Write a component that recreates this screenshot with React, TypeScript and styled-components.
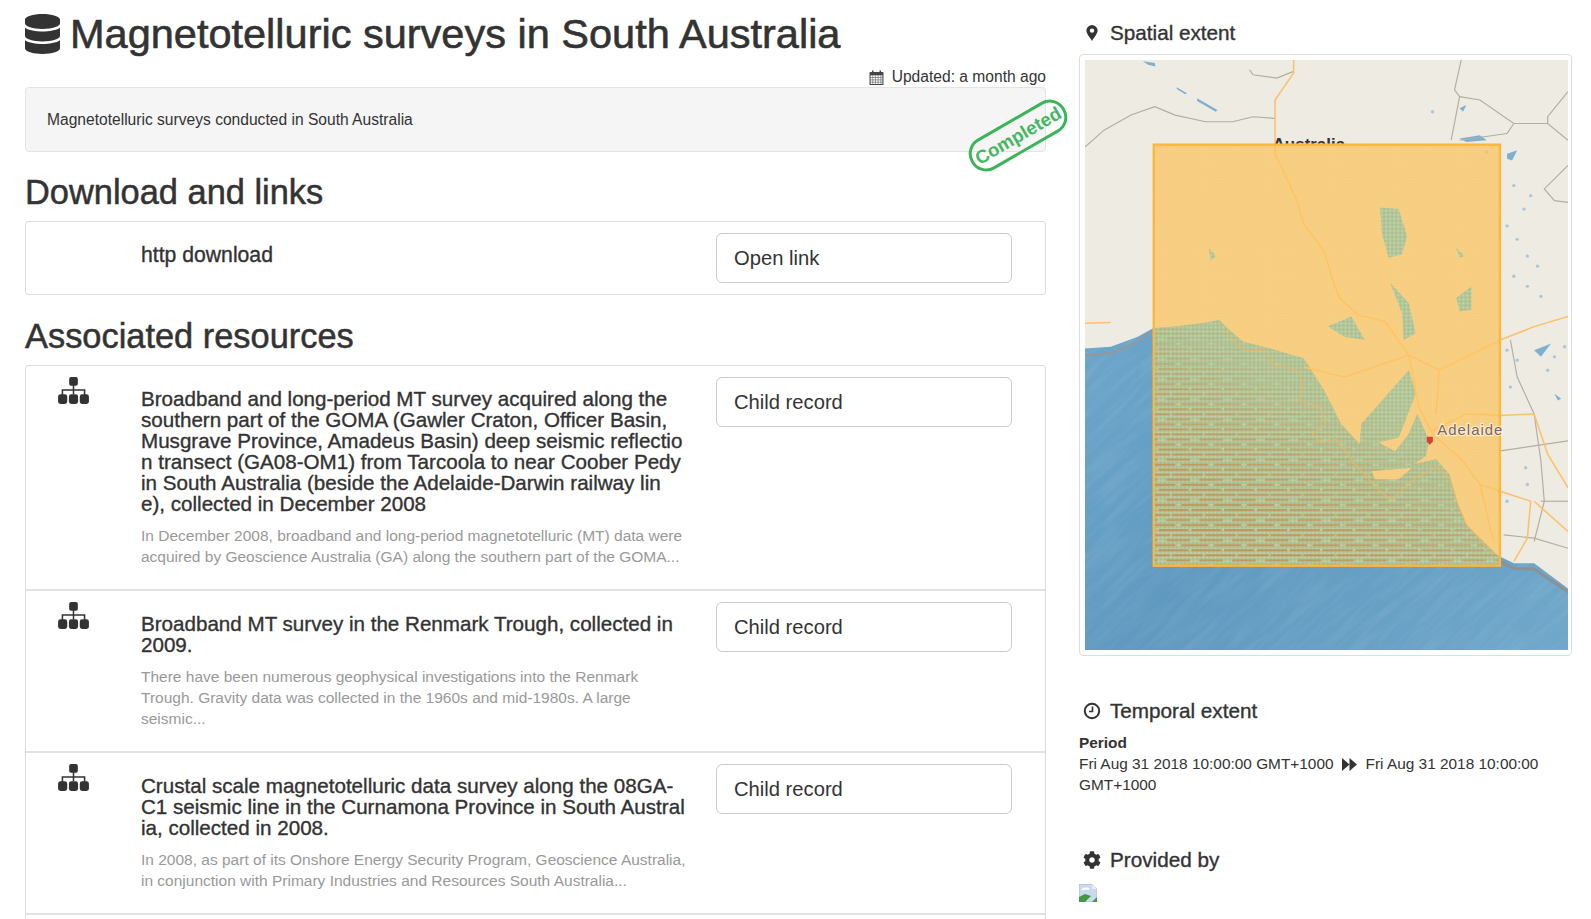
import React from 'react';
import styled, { createGlobalStyle } from 'styled-components';
import { FaDatabase, FaCog } from 'react-icons/fa';

const Global = createGlobalStyle`
  html, body { margin: 0; padding: 0; background: #fff; }
  body { font-family: "Liberation Sans", Arial, sans-serif; color: #333; }
`;

const Page = styled.div`
  display: grid;
  grid-template-columns: 1021px 493px;
  column-gap: 33px;
  padding-left: 25px;
  height: 919px;
  overflow: hidden;
  box-sizing: border-box;
`;
const Left = styled.main`
  min-width: 0;
`;
const Right = styled.aside`
  min-width: 0;
  padding-top: 21px;
`;
const Title = styled.h1`
  display: flex;
  align-items: center;
  gap: 10px;
  margin: 0;
  height: 68px;
  box-sizing: border-box;
  font-size: 41.5px;
  font-weight: 400;
  -webkit-text-stroke: 0.6px #333;
  white-space: nowrap;
  svg { width: 35px; height: 40px; flex: none; }
`;
const Updated = styled.div`
  display: flex;
  justify-content: flex-end;
  align-items: center;
  gap: 8px;
  height: 18px;
  font-size: 15.6px;
`;
const Summary = styled.div`
  position: relative;
  box-sizing: border-box;
  height: 65px;
  margin: 1px 0 21px;
  padding: 22px 21px 0;
  font-size: 15.6px;
  line-height: 20px;
  background: #f5f5f5;
  border: 1px solid #e3e3e3;
  border-radius: 4px;
`;
const Stamp = styled.div`
  position: absolute;
  right: -27px;
  top: 30px;
  box-sizing: border-box;
  width: 108px;
  height: 35px;
  display: flex;
  align-items: center;
  justify-content: center;
  border: 3px solid #3cb45a;
  border-radius: 17px;
  color: #45b763;
  font-size: 18.6px;
  font-weight: 700;
  white-space: nowrap;
  transform: rotate(-30deg);
`;
const SectionTitle = styled.h2`
  margin: 0;
  height: 48px;
  line-height: 39px;
  font-size: 34.4px;
  font-weight: 400;
  -webkit-text-stroke: 0.5px #333;
`;
const Panel = styled.section<{ $gap?: number }>`
  border: 1px solid #ddd;
  border-radius: 3px;
  margin-bottom: ${p => p.$gap ?? 0}px;
`;
const Row = styled.div<{ $divider?: boolean; $tight?: boolean }>`
  display: grid;
  grid-template-columns: 115px 575px 296px;
  padding: 11px 0 ${p => (p.$tight ? 11 : 22)}px;
  border-top: ${p => (p.$divider ? '2px solid #e2e2e2' : '0')};
`;
const IconCell = styled.div`
  display: flex;
  justify-content: center;
  padding: 0 20px 0 0;
  color: #333;
  svg { width: 31px; height: 27px; }
`;
const TextCell = styled.div`
  padding-top: 11px;
`;
const ItemTitle = styled.div`
  font-size: 20.6px;
  line-height: 21px;
  white-space: nowrap;
  -webkit-text-stroke: 0.35px #333;
`;
const ItemText = styled.div`
  margin-top: 11px;
  font-size: 15.5px;
  line-height: 21px;
  color: #999;
  white-space: nowrap;
`;
const LinkTitle = styled(ItemTitle)`
  font-size: 21.2px;
`;
const Action = styled.button`
  box-sizing: border-box;
  width: 296px;
  height: 50px;
  padding: 0 17px;
  text-align: left;
  font: 400 20.2px "Liberation Sans", Arial, sans-serif;
  color: #333;
  background: #fff;
  border: 1px solid #ccc;
  border-radius: 6px;
`;
const SideTitle = styled.h3`
  display: flex;
  align-items: center;
  margin: 0;
  padding-left: 3px;
  height: 24px;
  font-size: 20.7px;
  font-weight: 400;
  -webkit-text-stroke: 0.35px #333;
`;
const SideIcon = styled.span`
  display: flex;
  justify-content: center;
  width: 19px;
  margin-right: 9px;
  svg { display: block; }
`;
const MapFrame = styled.div`
  box-sizing: border-box;
  width: 493px;
  height: 602px;
  margin: 9px 0 43px;
  padding: 5px 3px 5px 5px;
  border: 1px solid #ddd;
  border-radius: 4px;
  svg { display: block; }
`;
const Dates = styled.div`
  margin: 9px 0 53px;
  font-size: 15.4px;
  line-height: 21px;
  width: 480px;
`;
const DatesLabel = styled.div`
  font-weight: 700;
`;
const Forward = styled.svg`
  display: inline-block;
  width: 15px;
  height: 13px;
  margin: 0 9px 0 8px;
  vertical-align: -2px;
`;
const Broken = styled.svg`
  display: block;
  margin-top: 12px;
`;

const SitemapIcon = () => (
  <svg viewBox="0 0 32 28">
    <rect x="11.500" y="0" width="9" height="9" rx="2" fill="#333" />
    <path d="M16 8v10M4.500 19v-5.500h23V19" fill="none" stroke="#333" strokeWidth="1.600" />
    <rect x="0" y="18" width="9.500" height="10" rx="2.500" fill="#333" />
    <rect x="11.250" y="18" width="9.500" height="10" rx="2.500" fill="#333" />
    <rect x="22.500" y="18" width="9.500" height="10" rx="2.500" fill="#333" />
  </svg>
);

const z = 'M74,65 150,60 230,30 275,5 340,0 420,-10 470,-20 500,10 540,45 620,65 720,95 780,190 830,290 885,350 890,290 960,210 1030,130 1050,200 1000,330 940,345 990,372 1030,320 1055,260 1090,340 1080,385 1045,410 1110,395 1150,440 1175,530 1200,590 1290,680 1340,705 1400,705 1500,780 1500,-794 74,-794Z';
const island = 'M920,430 1040,420 1000,455 930,455Z';
const coastLine = '74,85 150,80 230,45 275,12';
const gray = [
  '74,-535 130,-585 210,-630 280,-655 340,-630 430,-610 510,-610 570,-625 635,-620',
  '560,-765 570,-750 640,-740 690,-760',
  '1185,-795 1165,-705 1180,-685 1155,-555',
  '1180,-685 1240,-675 1340,-605 1440,-605 1500,-555',
  '1340,-605 1320,-575 1180,-555',
  '1500,-700 1440,-625 1440,-605',
  '1500,-480 1430,-410 1460,-375 1500,-370',
  '1330,40 1350,150 1400,260 1420,400 1430,520 1400,640',
  '1300,370 1500,340',
  '1420,520 1500,520',
  '1310,620 1400,630 1500,660',
];
const roadsOutside = [
  '690,-795 690,-755 635,-675 635,-515',
  '74,-10 150,-12',
  '1300,40 1400,0 1500,-30',
  '1400,260 1300,265',
  '1400,260 1440,380 1500,480',
  '1300,490 1390,520 1380,630 1340,700',
  '1400,520 1500,610',
];
const roadsInside = [
  '635,-515 700,-375 720,-305 780,-225 800,-155 825,-85 880,-35 960,-15 1030,85',
  '1030,85 1120,130 1300,40',
  '1030,85 1060,240 1100,320 1190,400 1240,470 1300,490',
  '1300,265 1200,260 1100,310',
  '1120,130 1110,260',
  '840,150 1030,85',
  '720,120 840,150',
  '1240,470 1280,640',
];
const seaLines = [
  '480,5 540,70 610,70 620,110 700,130 720,170 705,220 770,240 785,290 745,320 770,345 815,335 880,420 950,495 980,515 1050,450 1110,420 1150,450 1175,530 1200,590 1280,680',
];
const lakes = [
  'M245,-790 280,-785 282,-775 260,-780Z',
  'M345,-713 375,-695 370,-692 345,-708Z',
  'M405,-680 465,-645 460,-640 405,-672Z',
  'M1320,-515 1350,-525 1335,-495 1320,-500Z',
  'M1180,-650 1200,-660 1190,-640Z',
  'M1400,70 1450,50 1420,90Z',
  'M1460,200 1480,215 1470,220Z',
  'M1180,-560 1240,-570 1260,-555 1200,-550Z',
];
const specks = [
  [1320, -300], [1350, -260], [1380, -210], [1410, -180], [1340, -150], [1380, -120], [1420, -90],
  [1320, 70], [1350, 100], [1330, 180], [1440, 130], [1375, 420], [1380, 470], [1320, 520],
  [1460, 90], [1490, 60], [1340, -420], [1390, -390], [1370, -350], [1100, -640], [1260, -520],
];
const salt = [
  'M945,-355 1000,-350 1025,-270 1010,-215 970,-205 950,-280Z',
  'M975,-130 1030,-70 1050,20 1015,40 1010,-40Z',
  'M1170,-85 1215,-120 1215,-50 1180,-45Z',
  'M860,-30 900,40 840,30 790,0Z',
  'M1170,-235 1195,-210 1180,-205Z',
  'M440,-235 460,-210 445,-195Z',
];

const SurveyMap = () => (
  <svg width="483" height="590" viewBox="74 -794 1426 1757" preserveAspectRatio="none">
    <defs>
      <linearGradient id="sea" x1="0" y1="0" x2="1" y2="1">
        <stop offset="0" stopColor="#74afd2" />
        <stop offset=".55" stopColor="#6099c0" />
        <stop offset="1" stopColor="#70a8cb" />
      </linearGradient>
      <filter id="waves" x="0" y="0" width="100%" height="100%">
        <feTurbulence type="fractalNoise" baseFrequency="0.006 0.05" numOctaves="4" seed="4" />
        <feColorMatrix values="0 0 0 0 1  0 0 0 0 1  0 0 0 0 1  0.9 0 0 0 -0.32" />
      </filter>
      <pattern id="dots" width="9" height="9" patternUnits="userSpaceOnUse">
        <circle cx="2" cy="2" r="1.600" fill="#ffdb9c" />
        <circle cx="6.500" cy="6.500" r="1.600" fill="#f6c46e" />
      </pattern>
      <pattern id="seadots" width="12" height="12" patternUnits="userSpaceOnUse">
        <rect width="12" height="12" fill="#b4c799" />
        <circle cx="3" cy="3" r="2.400" fill="#cbd6a4" />
        <circle cx="9" cy="9" r="2.400" fill="#97ba96" />
      </pattern>
      <pattern id="hatch" width="97" height="60" patternUnits="userSpaceOnUse">
        <rect x="0" y="3" width="88" height="6" fill="#c2915a" />
        <rect x="41" y="18" width="90" height="6" fill="#c2915a" />
        <rect x="-56" y="18" width="90" height="6" fill="#c2915a" />
        <rect x="23" y="33" width="70" height="6" fill="#c2915a" />
        <rect x="67" y="48" width="80" height="6" fill="#c2915a" />
        <rect x="-30" y="48" width="80" height="6" fill="#c2915a" />
      </pattern>
      <linearGradient id="fade" x1="0.45" y1="0" x2="0" y2="1">
        <stop offset="0" stopColor="#000" />
        <stop offset=".4" stopColor="#000" />
        <stop offset=".5" stopColor="#333" />
        <stop offset=".62" stopColor="#999" />
        <stop offset=".8" stopColor="#eee" />
      </linearGradient>
      <mask id="water" maskUnits="userSpaceOnUse" x="74" y="-794" width="1426" height="1757">
        <rect x="277" y="-542" width="1022" height="1254" fill="url(#fade)" />
        <path d={z} fill="#000" />
        <path d={island} fill="#000" />
      </mask>
      <mask id="waterFlat" maskUnits="userSpaceOnUse" x="74" y="-794" width="1426" height="1757">
        <rect x="74" y="-794" width="1426" height="1757" fill="#fff" />
        <path d={z} fill="#000" />
        <path d={island} fill="#000" />
      </mask>
      <clipPath id="aboveBox">
        <rect x="74" y="-794" width="1426" height="252" />
      </clipPath>
    </defs>
    <rect x="74" y="-794" width="1426" height="1757" fill="url(#sea)" />
    <g mask="url(#waterFlat)">
      <rect x="-500" y="-1300" width="2600" height="2800" filter="url(#waves)" opacity=".18" transform="rotate(-42 800 80)" />
    </g>
    <path d={z} fill="#eeebe3" />
    <path d={island} fill="#eeebe3" />
    <polyline points={coastLine} fill="none" stroke="#8f9aa0" strokeWidth="7" />
    <polyline points="1300,700 1340,720 1400,722 1500,790" fill="none" stroke="#8a9298" strokeWidth="9" />
    {lakes.map(d => <path key={d} d={d} fill="#7fb0d2" />)}
    {specks.map(([x, y]) => <circle key={`${x}${y}`} cx={x} cy={y} r="5" fill="#a9c6da" />)}
    {gray.map(p => <polyline key={p} points={p} fill="none" stroke="#b4ae9f" strokeWidth="3.500" />)}
    {roadsOutside.map(p => <polyline key={p} points={p} fill="none" stroke="#fcc06a" strokeWidth="4.500" />)}
    <text x="628" y="-525" clipPath="url(#aboveBox)" fontFamily="Liberation Sans" fontWeight="700" fontSize="50" fill="#333">Australia</text>
    <rect x="277" y="-542" width="1022" height="1254" fill="#fbc25c" fillOpacity=".72" />
    <rect x="277" y="-542" width="1022" height="1254" fill="url(#dots)" fillOpacity=".4" />
    <rect x="277" y="-542" width="1022" height="1254" fill="url(#seadots)" mask="url(#waterFlat)" />
    <rect x="277" y="-542" width="1022" height="1254" fill="url(#hatch)" mask="url(#water)" />
    {salt.map(d => <path key={d} d={d} fill="url(#seadots)" />)}
    {seaLines.map(p => <polyline key={p} points={p} fill="none" stroke="#e8b765" strokeWidth="3" />)}
    {roadsInside.map(p => <polyline key={p} points={p} fill="none" stroke="#ffc45f" strokeWidth="4.500" />)}
    <rect x="277" y="-542" width="1022" height="1254" fill="none" stroke="#fdb73b" strokeWidth="7" />
    <text x="1114" y="322" fontFamily="Liberation Sans" fontSize="44" letterSpacing="3" fill="#7a6460" stroke="#fff" strokeOpacity=".6" strokeWidth="7" paintOrder="stroke">Adelaide</text>
    <path d="M1083,328 h18 v14 l-9,10 l-9,-10Z" fill="#d8412a" />
  </svg>
);

const Row1Title = () => (
  <ItemTitle>
    Broadband and long-period MT survey acquired along the<br />
    southern part of the GOMA (Gawler Craton, Officer Basin,<br />
    Musgrave Province, Amadeus Basin) deep seismic reflectio<br />
    n transect (GA08-OM1) from Tarcoola to near Coober Pedy<br />
    in South Australia (beside the Adelaide-Darwin railway lin<br />
    e), collected in December 2008
  </ItemTitle>
);

export default function App() {
  return (
    <Page>
      <Global />
      <Left>
        <Title>
          <FaDatabase color="#333" />
          Magnetotelluric surveys in South Australia
        </Title>
        <Updated>
          <svg width="15" height="15" viewBox="0 0 14 14">
            <path d="M1 2.500h12V13.500H1Z" fill="none" stroke="#444" />
            <path d="M1 2h12v3H1Z" fill="#444" />
            <path d="M3.500 .5v3M10.500 .5v3" stroke="#444" strokeWidth="1.400" />
            <path d="M1 7h12M1 9.200h12M1 11.400h12M3.500 5v8M6 5v8M8.500 5v8M11 5v8" stroke="#666" strokeWidth=".6" />
          </svg>
          Updated: a month ago
        </Updated>
        <Summary>
          Magnetotelluric surveys conducted in South Australia
          <Stamp>Completed</Stamp>
        </Summary>
        <SectionTitle>Download and links</SectionTitle>
        <Panel $gap={22}>
          <Row $tight>
            <IconCell />
            <TextCell><LinkTitle>http download</LinkTitle></TextCell>
            <Action>Open link</Action>
          </Row>
        </Panel>
        <SectionTitle>Associated resources</SectionTitle>
        <Panel>
          <Row>
            <IconCell><SitemapIcon /></IconCell>
            <TextCell>
              <Row1Title />
              <ItemText>
                In December 2008, broadband and long-period magnetotelluric (MT) data were<br />
                acquired by Geoscience Australia (GA) along the southern part of the GOMA...
              </ItemText>
            </TextCell>
            <Action>Child record</Action>
          </Row>
          <Row $divider>
            <IconCell><SitemapIcon /></IconCell>
            <TextCell>
              <ItemTitle>
                Broadband MT survey in the Renmark Trough, collected in<br />
                2009.
              </ItemTitle>
              <ItemText>
                There have been numerous geophysical investigations into the Renmark<br />
                Trough. Gravity data was collected in the 1960s and mid-1980s. A large<br />
                seismic...
              </ItemText>
            </TextCell>
            <Action>Child record</Action>
          </Row>
          <Row $divider>
            <IconCell><SitemapIcon /></IconCell>
            <TextCell>
              <ItemTitle>
                Crustal scale magnetotelluric data survey along the 08GA-<br />
                C1 seismic line in the Curnamona Province in South Austral<br />
                ia, collected in 2008.
              </ItemTitle>
              <ItemText>
                In 2008, as part of its Onshore Energy Security Program, Geoscience Australia,<br />
                in conjunction with Primary Industries and Resources South Australia...
              </ItemText>
            </TextCell>
            <Action>Child record</Action>
          </Row>
          <Row $divider />
        </Panel>
      </Left>
      <Right>
        <SideTitle>
          <SideIcon>
            <svg width="12" height="16" viewBox="0 0 12 16">
              <path fillRule="evenodd" d="M6 0a5.600 5.600 0 0 1 5.600 5.600C11.600 9 8 12.500 6 16 4 12.500 .4 9 .4 5.600A5.600 5.600 0 0 1 6 0ZM6 3.400a2.200 2.200 0 1 0 0 4.400 2.200 2.200 0 0 0 0-4.400Z" fill="#333" />
            </svg>
          </SideIcon>
          Spatial extent
        </SideTitle>
        <MapFrame><SurveyMap /></MapFrame>
        <SideTitle>
          <SideIcon>
            <svg width="18" height="18" viewBox="0 0 18 18">
              <circle cx="9" cy="9" r="7.200" fill="none" stroke="#333" strokeWidth="2" />
              <path d="M9.500 4.500v5H6" fill="none" stroke="#333" strokeWidth="1.600" />
            </svg>
          </SideIcon>
          Temporal extent
        </SideTitle>
        <Dates>
          <DatesLabel>Period</DatesLabel>
          Fri Aug 31 2018 10:00:00 GMT+1000
          <Forward viewBox="0 0 14 12">
            <path d="M0 0l7 6-7 6ZM7 0l7 6-7 6Z" fill="#333" />
          </Forward>
          Fri Aug 31 2018 10:00:00 GMT+1000
        </Dates>
        <SideTitle>
          <SideIcon><FaCog size={18} color="#333" /></SideIcon>
          Provided by
        </SideTitle>
        <Broken width="18" height="18" viewBox="0 0 18 18">
          <path d="M0 0h13l5 5v13H0Z" fill="#c9d9ef" stroke="#b5b5b5" strokeWidth=".8" />
          <path d="M0 18V13l6-3 6 2-6 6Z" fill="#3f9a3f" />
          <path d="M13 18l5-5v5Z" fill="#3f9a3f" />
          <path d="M3 6c2-2 4-2 7-1" stroke="#fff" strokeWidth="2" fill="none" />
          <path d="M13 0v5h5Z" fill="#eee" />
        </Broken>
      </Right>
    </Page>
  );
}
